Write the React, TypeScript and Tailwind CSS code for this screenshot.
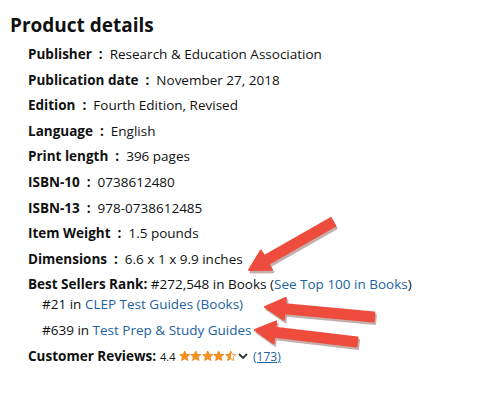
import React from "react";

const rows: [string, string][] = [
  ["Publisher", "Research & Education Association"],
  ["Publication date", "November 27, 2018"],
  ["Edition", "Fourth Edition, Revised"],
  ["Language", "English"],
  ["Print length", "396 pages"],
  ["ISBN-10", "0738612480"],
  ["ISBN-13", "978-0738612485"],
  ["Item Weight", "1.5 pounds"],
  ["Dimensions", "6.6 x 1 x 9.9 inches"],
];

function Star({ fill }: { fill: "full" | "half" }) {
  return (
    <svg width="11.5" height="12" viewBox="0 0 24 24" className="inline-block">
      <defs>
        <linearGradient id="half">
          <stop offset="50%" stopColor="#f7941d" />
          <stop offset="50%" stopColor="#ffffff" />
        </linearGradient>
      </defs>
      <path
        d="M12 1.5l3.1 6.9 7.4.7-5.6 5 1.7 7.4L12 17.6l-6.6 3.9 1.7-7.4-5.6-5 7.4-.7z"
        fill={fill === "full" ? "#f7941d" : "url(#half)"}
        stroke="#e87b0c"
        strokeWidth="1.5"
        strokeLinejoin="round"
      />
    </svg>
  );
}

/* 红色指示箭头 */
function Arrow({ x1, y1, x2, y2 }: { x1: number; y1: number; x2: number; y2: number }) {
  const dx = x2 - x1, dy = y2 - y1;
  const len = Math.hypot(dx, dy);
  const ux = dx / len, uy = dy / len;
  const px = -uy, py = ux;
  const head = 20, hw = 11, sw = 4.5;
  const bx = x2 - ux * head, by = y2 - uy * head;
  const pts = [
    [x1 + px * sw, y1 + py * sw],
    [bx + px * sw, by + py * sw],
    [bx + px * hw, by + py * hw],
    [x2, y2],
    [bx - px * hw, by - py * hw],
    [bx - px * sw, by - py * sw],
    [x1 - px * sw, y1 - py * sw],
  ].map((p) => p.join(",")).join(" ");
  return (
    <g>
      <polygon points={pts} fill="#5a1a14" opacity="0.35" transform="translate(1.5,2.5)" strokeLinejoin="round" stroke="#5a1a14" strokeWidth="2" />
      <polygon points={pts} fill="#ee4c3d" stroke="#ee4c3d" strokeWidth="2" strokeLinejoin="round" />
    </g>
  );
}

export default function App() {
  return (
    <div className="relative h-[400px] w-[480px] overflow-hidden bg-white text-[#0f1111]" style={{ fontFamily: '"Open Sans", "Noto Sans", Arial, sans-serif' }}>
      <div className="pl-[10px] pt-[11px]">
        <h2 className="text-[19px] font-bold leading-[28px]">Product details</h2>
        <ul className="mt-[7px] pl-[18px] text-[13.5px] leading-[17px]">
          {rows.map(([k, v]) => (
            <li key={k} className="mb-[8.6px]">
              <span className="font-bold">{k}</span>
              <span className="font-bold mx-[7px]">:</span>
              <span>{v}</span>
            </li>
          ))}
          <li className="mb-[8.6px]">
            <span className="font-bold">Best Sellers Rank:</span> #272,548 in Books (
            <a className="text-[#2162a1]">See Top 100 in Books</a>)
            <ul className="pl-[14px] mt-[3px]">
              <li className="mb-[8.6px]">
                #21 in <a className="text-[#2162a1]">CLEP Test Guides (Books)</a>
              </li>
              <li>
                #639 in <a className="text-[#2162a1]">Test Prep &amp; Study Guides</a>
              </li>
            </ul>
          </li>
          <li className="flex items-center">
            <span className="font-bold">Customer Reviews:</span>
            <span className="ml-[4px] text-[11px]">4.4</span>
            <span className="ml-[3px] flex items-center">
              <Star fill="full" />
              <Star fill="full" />
              <Star fill="full" />
              <Star fill="full" />
              <Star fill="half" />
            </span>
            <svg width="12" height="12" viewBox="0 0 12 12" className="ml-[1px]">
              <path d="M2 4l4 4 4-4" fill="none" stroke="#333" strokeWidth="1.8" />
            </svg>
            <a className="ml-[4px] text-[12px] text-[#2162a1] underline">(173)</a>
          </li>
        </ul>
      </div>
      <svg className="pointer-events-none absolute left-0 top-0" width="480" height="400">
        <Arrow x1={333} y1={222} x2={249} y2={270} />
        <Arrow x1={374} y1={317} x2={265} y2={307} />
        <Arrow x1={357} y1={342} x2={255} y2={330} />
      </svg>
    </div>
  );
}
